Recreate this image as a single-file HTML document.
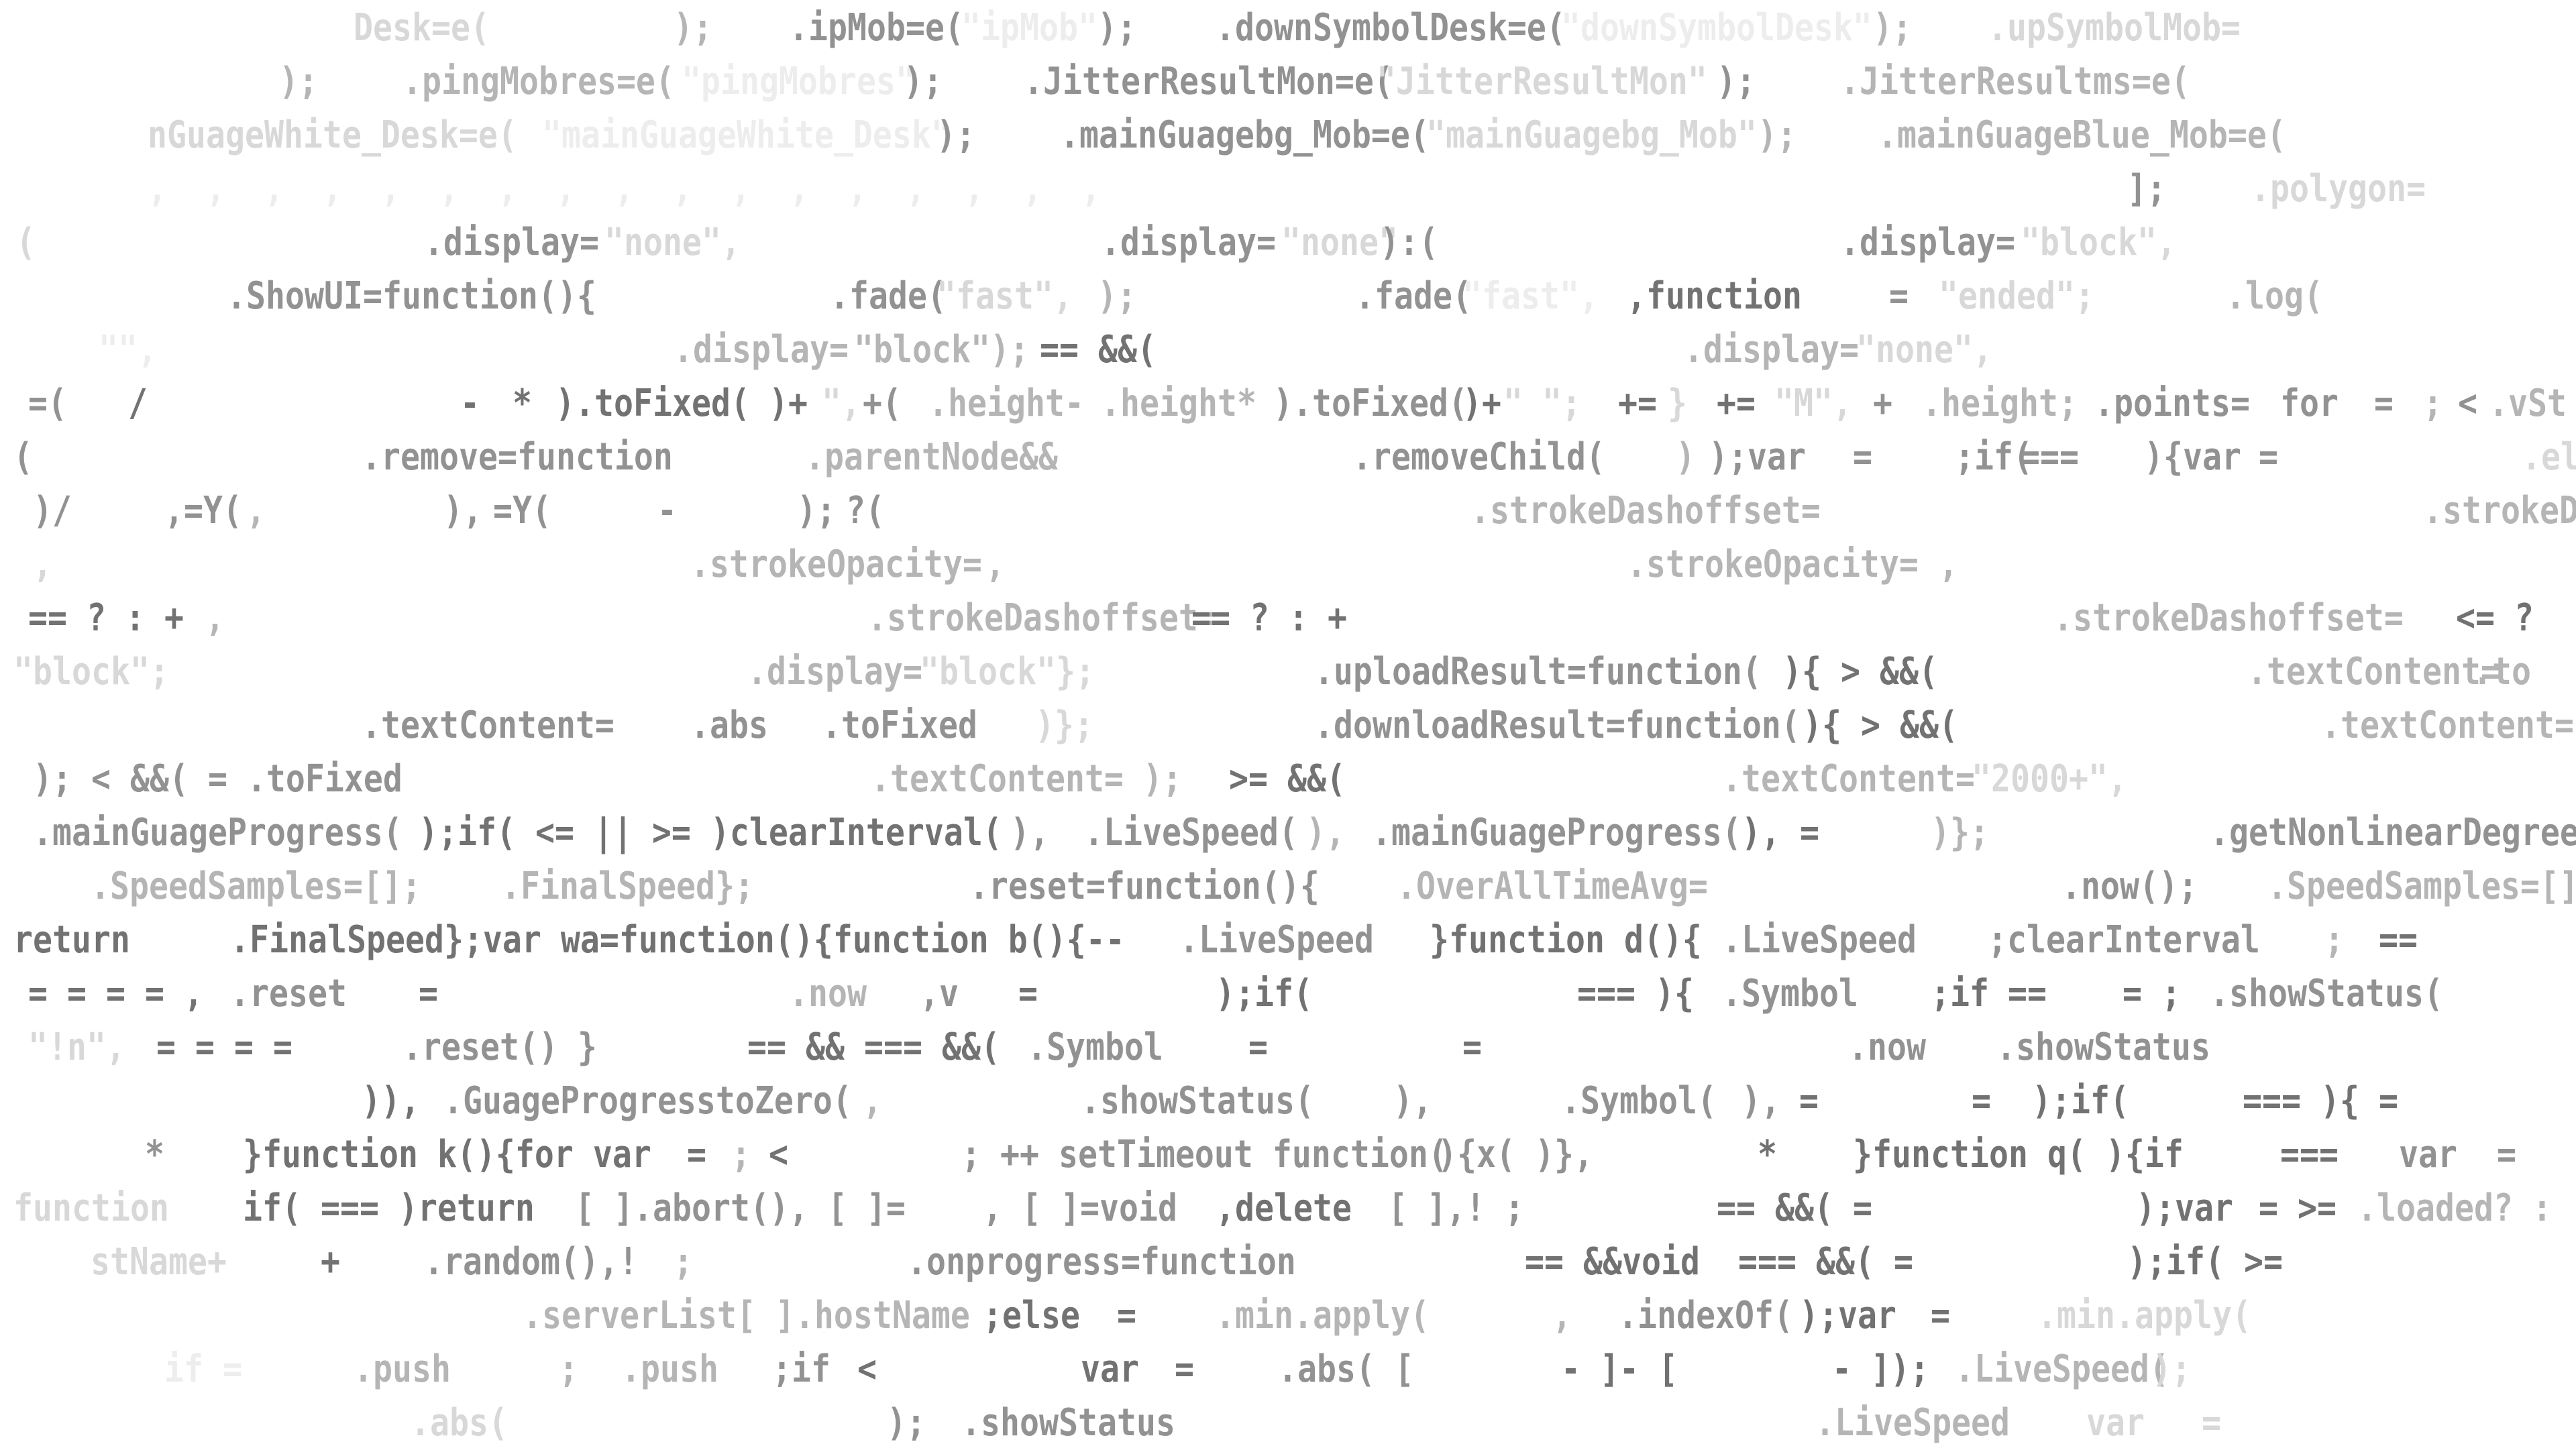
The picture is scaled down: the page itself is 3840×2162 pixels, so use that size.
<!DOCTYPE html>
<html><head><meta charset="utf-8"><style>
html,body{margin:0;padding:0;width:3840px;height:2160px;background:#fff;overflow:hidden}
.l{position:absolute;left:0;height:80px;width:3840px}
.l span{position:absolute;top:0;line-height:80px;font-family:"DejaVu Sans Mono","Liberation Mono",monospace;font-size:56px;font-weight:bold;white-space:pre;transform:scaleX(0.86);transform-origin:0 50%}
.a{color:#727272}.b{color:#929292}.c{color:#b5b5b5}.d{color:#d8d8d8}.e{color:#ededed}
</style></head><body>
<div id="w"></div>
<script>
var L=[
[[215,"Desk=e(","d"],[410,");","c"],[480,".ipMob=e(","b"],[585,'"ipMob"',"e"],[668,");","b"],[740,".downSymbolDesk=e(","b"],[950,'"downSymbolDesk"',"e"],[1140,");","c"],[1210,".upSymbolMob=","d"]],
[[170,");","c"],[245,".pingMobres=e(","c"],[415,'"pingMobres"',"e"],[550,");","b"],[623,".JitterResultMon=e(","b"],[838,'"JitterResultMon"',"d"],[1045,");","b"],[1120,".JitterResultms=e(","c"]],
[[90,"nGuageWhite_Desk=e(","d"],[330,'"mainGuageWhite_Desk"',"e"],[570,");","b"],[645,".mainGuagebg_Mob=e(","b"],[868,'"mainGuagebg_Mob"',"d"],[1070,");","c"],[1143,".mainGuageBlue_Mob=e(","c"]],
[[90,",  ,  ,  ,  ,  ,  ,  ,  ,  ,  ,  ,  ,  ,  ,  ,  ,","e"],[1295,"];","b"],[1370,".polygon=","d"]],
[[10,"(","d"],[258,".display=","b"],[368,'"none",',"d"],[670,".display=","b"],[780,'"none"',"d"],[840,"):(","b"],[1120,".display=","b"],[1230,'"block",',"d"]],
[[138,".ShowUI=function(){","b"],[505,".fade(","b"],[570,'"fast",',"d"],[668,");","c"],[825,".fade(","b"],[890,'"fast",',"e"],[990,",function","a"],[1150,"=","b"],[1180,'"ended";',"d"],[1355,".log(","c"]],
[[60,'"",',"e"],[410,".display=","c"],[520,'"block");',"c"],[633,"== &&(","a"],[1025,".display=","c"],[1130,'"none",',"d"]],
[[17,"=(","b"],[78,"/","a"],[280,"-","a"],[312,"*","a"],[338,")","a"],[350,".toFixed(","a"],[468,")+","a"],[500,'",',"d"],[525,"+(","b"],[565,".height-","c"],[670,".height*","c"],[775,").toFixed(","b"],[890,")+","a"],[915,'" ";',"d"],[985,"+=","a"],[1015,"}","d"],[1045,"+=","a"],[1080,'"M",',"d"],[1140,"+","b"],[1170,".height;","c"],[1275,".points=","b"],[1388,"for","b"],[1445,"=","b"],[1475,";","c"],[1496,"<","b"],[1515,".vSt","c"]],
[[8,"(","b"],[220,".remove=function","b"],[490,".parentNode&&","c"],[823,".removeChild(","b"],[1020,")","c"],[1040,");var","b"],[1128,"=","b"],[1190,";if(","b"],[1230,"===","b"],[1305,"){var","b"],[1375,"=","b"],[1535,".el","d"]],
[[20,")/","b"],[100,",=Y(","b"],[150,",","c"],[270,"),","b"],[300,"=Y(","b"],[400,"-","b"],[485,");","b"],[515,"?(","b"],[895,".strokeDashoffset=","c"],[1475,".strokeD","c"]],
[[20,",","d"],[420,".strokeOpacity=","c"],[600,",","c"],[990,".strokeOpacity=","c"],[1180,",","c"]],
[[17,"== ? : +","a"],[125,",","c"],[528,".strokeDashoffset=","c"],[725,"== ? : +","a"],[1250,".strokeDashoffset=","c"],[1495,"<= ?","a"]],
[[8,'"block";',"d"],[455,".display=","c"],[560,'"block"};',"d"],[800,".uploadResult=function(","b"],[1085,"){ > &&(","a"],[1368,".textContent=","c"],[1505,".to","c"]],
[[220,".textContent=","b"],[420,".abs","b"],[500,".toFixed","b"],[630,")};","d"],[800,".downloadResult=function(","b"],[1097,"){ > &&(","a"],[1413,".textContent=","c"]],
[[20,"); < &&( = .toFixed","b"],[530,".textContent= );","c"],[748,">= &&(","a"],[1048,".textContent=","c"],[1200,'"2000+",',"d"]],
[[20,".mainGuageProgress(","b"],[255,");if( <= || >= )clearInterval(","a"],[615,"),","b"],[660,".LiveSpeed(","b"],[795,"),","c"],[835,".mainGuageProgress(","b"],[1060,"), =","a"],[1175,")};","c"],[1345,".getNonlinearDegree","b"]],
[[55,".SpeedSamples=[];","c"],[305,".FinalSpeed};","c"],[590,".reset=function(){","b"],[850,".OverAllTimeAvg=","c"],[1255,".now();","b"],[1380,".SpeedSamples=[]","c"]],
[[8,"return","a"],[140,".FinalSpeed};var wa=function(){function b(){--","a"],[718,".LiveSpeed","b"],[870,"}function d(){","a"],[1048,".LiveSpeed","b"],[1210,";clearInterval","b"],[1415,";","c"],[1448,"==","a"]],
[[17,"= = = = ,","a"],[140,".reset","b"],[255,"=","a"],[480,".now","c"],[560,",v","b"],[620,"=","a"],[740,");if(","a"],[960,"=== ){","a"],[1048,".Symbol","b"],[1175,";if","a"],[1222,"==","a"],[1292,"= ;","a"],[1345,".showStatus(","b"]],
[[17,'"!n",',"d"],[95,"= = = =","a"],[245,".reset() }","b"],[455,"== && === &&(","a"],[625,".Symbol","b"],[760,"=","a"],[890,"=","a"],[1125,".now","b"],[1215,".showStatus","b"]],
[[220,")),","a"],[270,".GuageProgresstoZero(","b"],[525,",","c"],[658,".showStatus(","b"],[848,"),","b"],[950,".Symbol(","b"],[1060,"),","b"],[1095,"=","a"],[1200,"=","a"],[1237,");if(","a"],[1365,"=== ){ =","a"]],
[[88,"*","b"],[148,"}function k(){for var","a"],[418,"=","a"],[445,";","c"],[468,"<","a"],[585,"; ++ setTimeout function(","b"],[875,"){x( )},","b"],[1070,"*","a"],[1128,"}function q( ){if","a"],[1388,"===","a"],[1460,"var","b"],[1520,"=","b"]],
[[8,"function","d"],[148,"if( === )return","a"],[350,"[ ].abort(), [ ]=","b"],[598,", [ ]=void","b"],[740,",delete","a"],[845,"[ ],! ;","b"],[1045,"== &&( =","a"],[1300,");var","a"],[1375,"= >=","a"],[1435,".loaded? :","c"]],
[[55,"stName+","d"],[195,"+","a"],[258,".random(),!","b"],[410,";","c"],[552,".onprogress=function","b"],[928,"== &&void","a"],[1058,"=== &&( =","a"],[1295,");if( >=","a"]],
[[318,".serverList[ ].hostName","c"],[598,";else","a"],[680,"=","a"],[740,".min.apply(","c"],[945,",","c"],[985,".indexOf(","b"],[1095,");var","a"],[1175,"=","a"],[1240,".min.apply(","d"]],
[[100,"if =","e"],[215,".push","c"],[340,";","c"],[378,".push","c"],[470,";if","b"],[522,"<","a"],[658,"var","a"],[715,"=","a"],[778,".abs( [","b"],[950,"- ]- [","a"],[1115,"- ]);","a"],[1190,".LiveSpeed(","c"],[1310,");","d"]],
[[250,".abs(","d"],[540,");","b"],[585,".showStatus","b"],[1105,".LiveSpeed","c"],[1270,"var","d"],[1340,"=","d"]]
];
var h="";
L.forEach(function(r,i){h+='<div class="l" style="top:'+(80*i+2)+'px">';r.forEach(function(t){h+='<span class="'+t[2]+'" style="left:'+Math.round(t[0]*2.449)+'px">'+t[1].replace(/&/g,"&amp;").replace(/</g,"&lt;")+'</span>';});h+='</div>';});
document.getElementById("w").innerHTML=h;
</script>
</body></html>
